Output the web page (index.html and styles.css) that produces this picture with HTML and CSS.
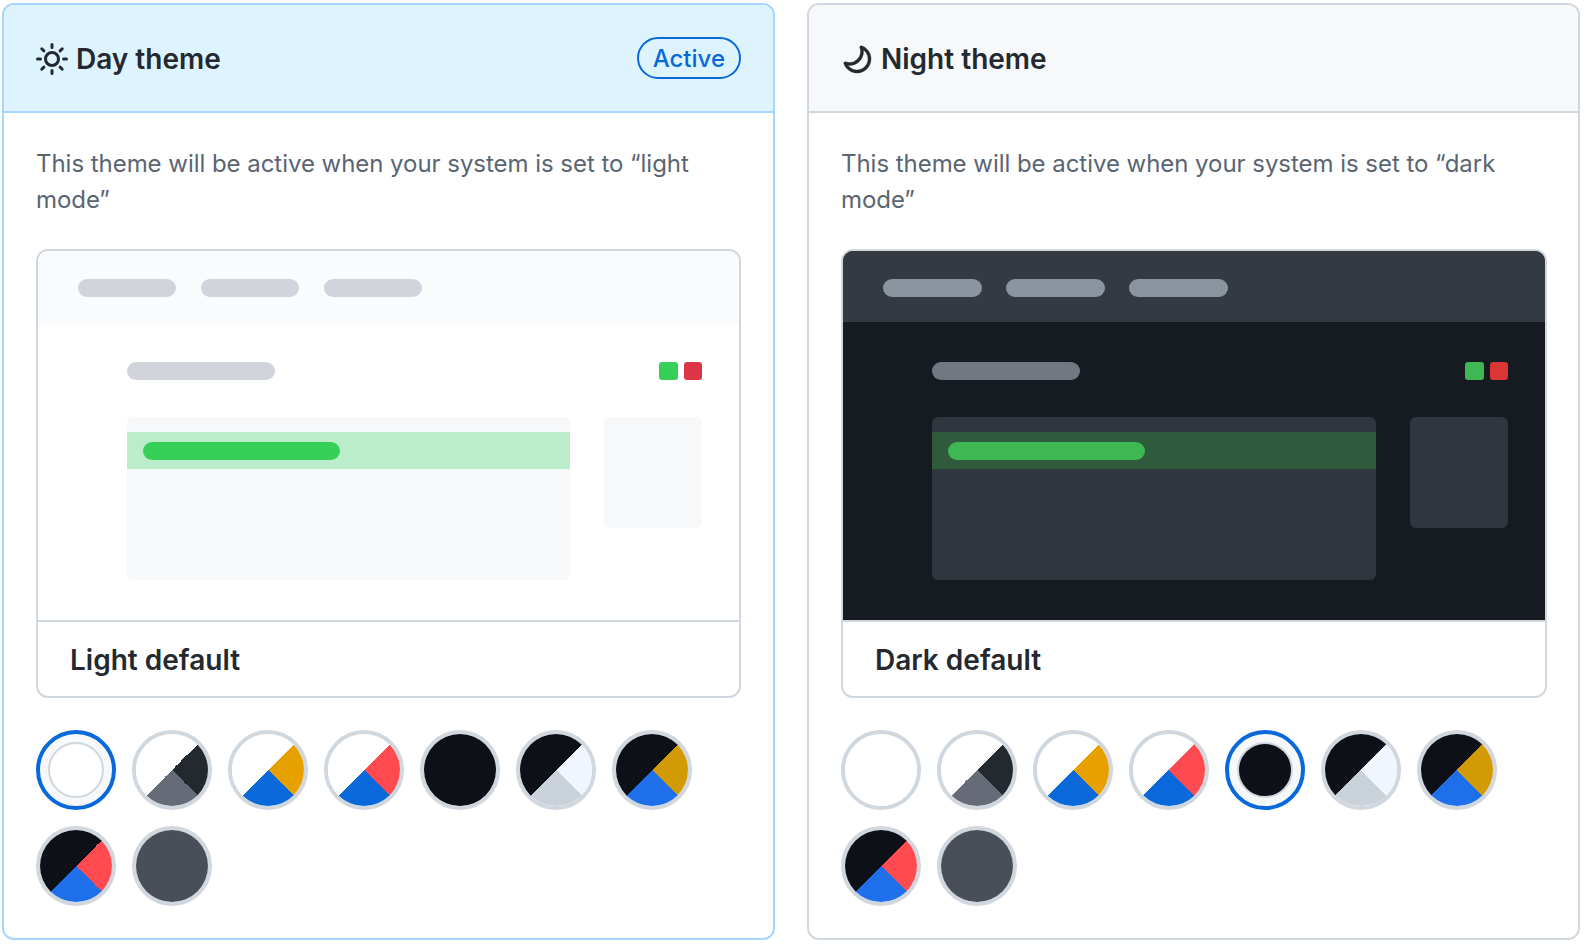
FILE: index.html
```html
<!DOCTYPE html>
<html lang="en">
<head>
  <meta charset="UTF-8" />
  <title>Theme preferences</title>
  <link rel="stylesheet" href="styles.css">
</head>
<body>

  <div class="themes">

    <!-- Day theme -->
    <section class="card card-active">
      <header class="card-header">
        <h2 class="card-title">
          <svg class="icon" viewBox="0 0 16 16" width="32" height="32"><path fill-rule="evenodd" d="M8 10.5a2.5 2.5 0 100-5 2.5 2.5 0 000 5zM8 12a4 4 0 100-8 4 4 0 000 8zM8 0a.75.75 0 01.75.75v1.5a.75.75 0 01-1.5 0V.75A.75.75 0 018 0zm0 13a.75.75 0 01.75.75v1.5a.75.75 0 01-1.5 0v-1.5A.75.75 0 018 13zM2.343 2.343a.75.75 0 011.061 0l1.06 1.061a.75.75 0 01-1.06 1.06l-1.06-1.06a.75.75 0 010-1.06zm9.193 9.193a.75.75 0 011.06 0l1.061 1.06a.75.75 0 01-1.06 1.061l-1.061-1.06a.75.75 0 010-1.061zM16 8a.75.75 0 01-.75.75h-1.5a.75.75 0 010-1.5h1.5A.75.75 0 0116 8zM3 8a.75.75 0 01-.75.75H.75a.75.75 0 010-1.5h1.5A.75.75 0 013 8zm10.657-5.657a.75.75 0 010 1.061l-1.061 1.06a.75.75 0 11-1.06-1.06l1.06-1.06a.75.75 0 011.06 0zm-9.193 9.193a.75.75 0 010 1.06l-1.06 1.061a.75.75 0 11-1.061-1.06l1.06-1.061a.75.75 0 011.061 0z"/></svg>
          Day theme
        </h2>
        <span class="badge">Active</span>
      </header>
      <div class="card-body">
        <p class="desc">This theme will be active when your system is set to “light mode”</p>

        <div class="preview preview-light">
          <div class="preview-img">
            <div class="preview-bar">
              <span class="pill"></span>
              <span class="pill"></span>
              <span class="pill"></span>
            </div>
            <div class="preview-main">
              <div class="preview-top">
                <span class="line"></span>
                <div class="dots">
                  <span class="dot dot-green"></span>
                  <span class="dot dot-red"></span>
                </div>
              </div>
              <div class="preview-content">
                <div class="box">
                  <div class="band"><span class="band-pill"></span></div>
                </div>
                <div class="side"></div>
              </div>
            </div>
          </div>
          <div class="preview-label">Light default</div>
        </div>

        <div class="swatches">
          <div class="swatch selected"><span class="fill s-white"></span></div>
          <div class="swatch"><span class="fill s-white-hc"></span></div>
          <div class="swatch"><span class="fill s-white-yellow"></span></div>
          <div class="swatch"><span class="fill s-white-red"></span></div>
          <div class="swatch"><span class="fill s-black"></span></div>
          <div class="swatch"><span class="fill s-black-hc"></span></div>
          <div class="swatch"><span class="fill s-black-yellow"></span></div>
          <div class="swatch"><span class="fill s-black-red"></span></div>
          <div class="swatch"><span class="fill s-dimmed"></span></div>
        </div>
      </div>
    </section>

    <!-- Night theme -->
    <section class="card card-night">
      <header class="card-header">
        <h2 class="card-title">
          <svg class="icon icon-moon" viewBox="0 0 16 16" width="32" height="32"><path fill-rule="evenodd" d="M9.598 1.591a.75.75 0 01.785-.175 7 7 0 11-8.967 8.967.75.75 0 01.961-.96 5.5 5.5 0 007.046-7.046.75.75 0 01.175-.786zm1.616 1.945a7 7 0 01-7.678 7.678 5.5 5.5 0 107.678-7.678z"/></svg>
          Night theme
        </h2>
      </header>
      <div class="card-body">
        <p class="desc">This theme will be active when your system is set to “dark mode”</p>

        <div class="preview preview-dark">
          <div class="preview-img">
            <div class="preview-bar">
              <span class="pill"></span>
              <span class="pill"></span>
              <span class="pill"></span>
            </div>
            <div class="preview-main">
              <div class="preview-top">
                <span class="line"></span>
                <div class="dots">
                  <span class="dot dot-green"></span>
                  <span class="dot dot-red"></span>
                </div>
              </div>
              <div class="preview-content">
                <div class="box">
                  <div class="band"><span class="band-pill"></span></div>
                </div>
                <div class="side"></div>
              </div>
            </div>
          </div>
          <div class="preview-label">Dark default</div>
        </div>

        <div class="swatches">
          <div class="swatch"><span class="fill s-white"></span></div>
          <div class="swatch"><span class="fill s-white-hc"></span></div>
          <div class="swatch"><span class="fill s-white-yellow"></span></div>
          <div class="swatch"><span class="fill s-white-red"></span></div>
          <div class="swatch selected"><span class="fill s-black"></span></div>
          <div class="swatch"><span class="fill s-black-hc"></span></div>
          <div class="swatch"><span class="fill s-black-yellow"></span></div>
          <div class="swatch"><span class="fill s-black-red"></span></div>
          <div class="swatch"><span class="fill s-dimmed"></span></div>
        </div>
      </div>
    </section>

  </div>

</body>
</html>
```

FILE: styles.css
```css
body {
  font-family: Inter, "Noto Sans", sans-serif;
  margin: 0;
  background: #fff;
  color: #24292f;
}

.themes {
  display: grid;
  grid-template-columns: 773px 773px;
  gap: 32px;
  padding: 3px 0 0 2px;
}

/* Carte */
.card {
  border: 2px solid #d0d7de;
  border-radius: 12px;
  overflow: hidden;
}
.card-header {
  display: flex;
  align-items: center;
  justify-content: space-between;
  height: 106px;
  padding: 0 32px;
  background: #f6f8fa;
  border-bottom: 2px solid #d0d7de;
}
.card-active {
  border-color: #a5d6ff;
}
.card-active .card-header {
  background: #ddf4ff;
  border-bottom-color: #a5d6ff;
}
.card-title {
  display: flex;
  align-items: center;
  gap: 8px;
  margin: 2px 0 0;
  font-size: 28px;
  font-weight: 600;
}
.icon {
  fill: #24292f;
}
.icon-moon {
  stroke: #24292f;
  stroke-width: 0.2;
}
.badge {
  border: 2px solid #0969da;
  border-radius: 24px;
  padding: 1px 14px 0;
  line-height: 37px;
  font-size: 24px;
  font-weight: 500;
  color: #0969da;
}

.card-body {
  padding: 33px 32px 32px;
}
.card-night .card-body {
  padding-right: 31px;
}
.desc {
  margin: 0 0 31px;
  font-size: 24px;
  line-height: 36px;
  letter-spacing: -0.04px;
  color: #5a6572;
}

/* Apercu du theme */
.preview {
  border: 2px solid #d0d7de;
  border-radius: 12px;
  overflow: hidden;
}
.preview-img {
  height: 369px;
  border-bottom: 2px solid #d0d7de;
}
.preview-bar {
  display: flex;
  gap: 25px;
  height: 46px;
  padding: 28px 0 0 40px;
}
.pill,
.line,
.band-pill {
  display: block;
  height: 18px;
  border-radius: 9px;
}
.pill {
  width: 98px;
}
.preview-main {
  padding: 37px 37px 0 89px;
}
.preview-top {
  display: flex;
  justify-content: space-between;
  margin-bottom: 37px;
}
.line {
  width: 148px;
}
.dots {
  display: flex;
  gap: 6px;
}
.dot {
  width: 18.5px;
  height: 18px;
  border-radius: 3px;
}
.preview-content {
  display: flex;
  justify-content: space-between;
  align-items: flex-start;
}
.box {
  width: 443px;
  height: 163px;
  padding-top: 15px;
  box-sizing: border-box;
  border-radius: 6px;
  overflow: hidden;
}
.band {
  height: 37px;
  padding: 10px 15.5px 0;
  box-sizing: border-box;
}
.band-pill {
  width: 197px;
}
.side {
  width: 98px;
  height: 111px;
  border-radius: 6px;
}
.preview-label {
  height: 72px;
  padding: 2px 0 0 32px;
  line-height: 73px;
  font-size: 28px;
  font-weight: 600;
}

.preview-light .preview-bar { background: #fafbfc; }
.preview-light .pill,
.preview-light .line { background: #d1d5db; }
.preview-light .box,
.preview-light .side { background: #f6f8fa; }
.preview-light .band { background: #bbedcb; }
.preview-light .band-pill,
.preview-light .dot-green { background: #36d058; }
.preview-light .dot-red { background: #dc3545; }

.preview-dark .preview-img { background: #161b22; }
.preview-dark .preview-bar { background: #343a42; height: 43px; gap: 24px; }
.preview-dark .preview-main { padding-top: 40px; }
.preview-dark .pill { background: #8b959f; width: 99px; }
.preview-dark .line { background: #727781; }
.preview-dark .box { width: 444px; }
.preview-dark .box,
.preview-dark .side { background: #30363d; }
.preview-dark .band { background: #2f5a3c; }
.preview-dark .band-pill,
.preview-dark .dot-green { background: #3db852; }
.preview-dark .dot-red { background: #db3535; }

/* Pastilles de couleur */
.swatches {
  display: flex;
  flex-wrap: wrap;
  gap: 16px;
  margin-top: 32px;
}
.swatch {
  width: 80px;
  height: 80px;
  box-sizing: border-box;
  border: 4px solid #d0d7de;
  border-radius: 50%;
}
.fill {
  display: block;
  width: 100%;
  height: 100%;
  box-sizing: border-box;
  border-radius: 50%;
}
.swatch.selected {
  border-color: #0969da;
  background: #f6f8fa;
  padding: 8px;
}
.swatch.selected .fill {
  border: 2px solid #d0d7de;
}

.s-white { background: #fff; }
.s-black { background: #0d1117; }
.s-dimmed { background: #484f58; }
.s-white-hc { background: conic-gradient(from 45deg, #24292f 0 90deg, #666c77 90deg 180deg, #fff 180deg); }
.s-white-yellow { background: conic-gradient(from 45deg, #e6a100 0 90deg, #0969da 90deg 180deg, #fff 180deg); }
.s-white-red { background: conic-gradient(from 45deg, #ff4b4f 0 90deg, #0969da 90deg 180deg, #fff 180deg); }
.s-black-hc { background: conic-gradient(from 45deg, #eff6ff 0 90deg, #c9d1d9 90deg 180deg, #0d1117 180deg); }
.s-black-yellow { background: conic-gradient(from 45deg, #d29a04 0 90deg, #1f6feb 90deg 180deg, #0d1117 180deg); }
.s-black-red { background: conic-gradient(from 45deg, #ff4a4f 0 90deg, #1f6feb 90deg 180deg, #0d1117 180deg); }
```
